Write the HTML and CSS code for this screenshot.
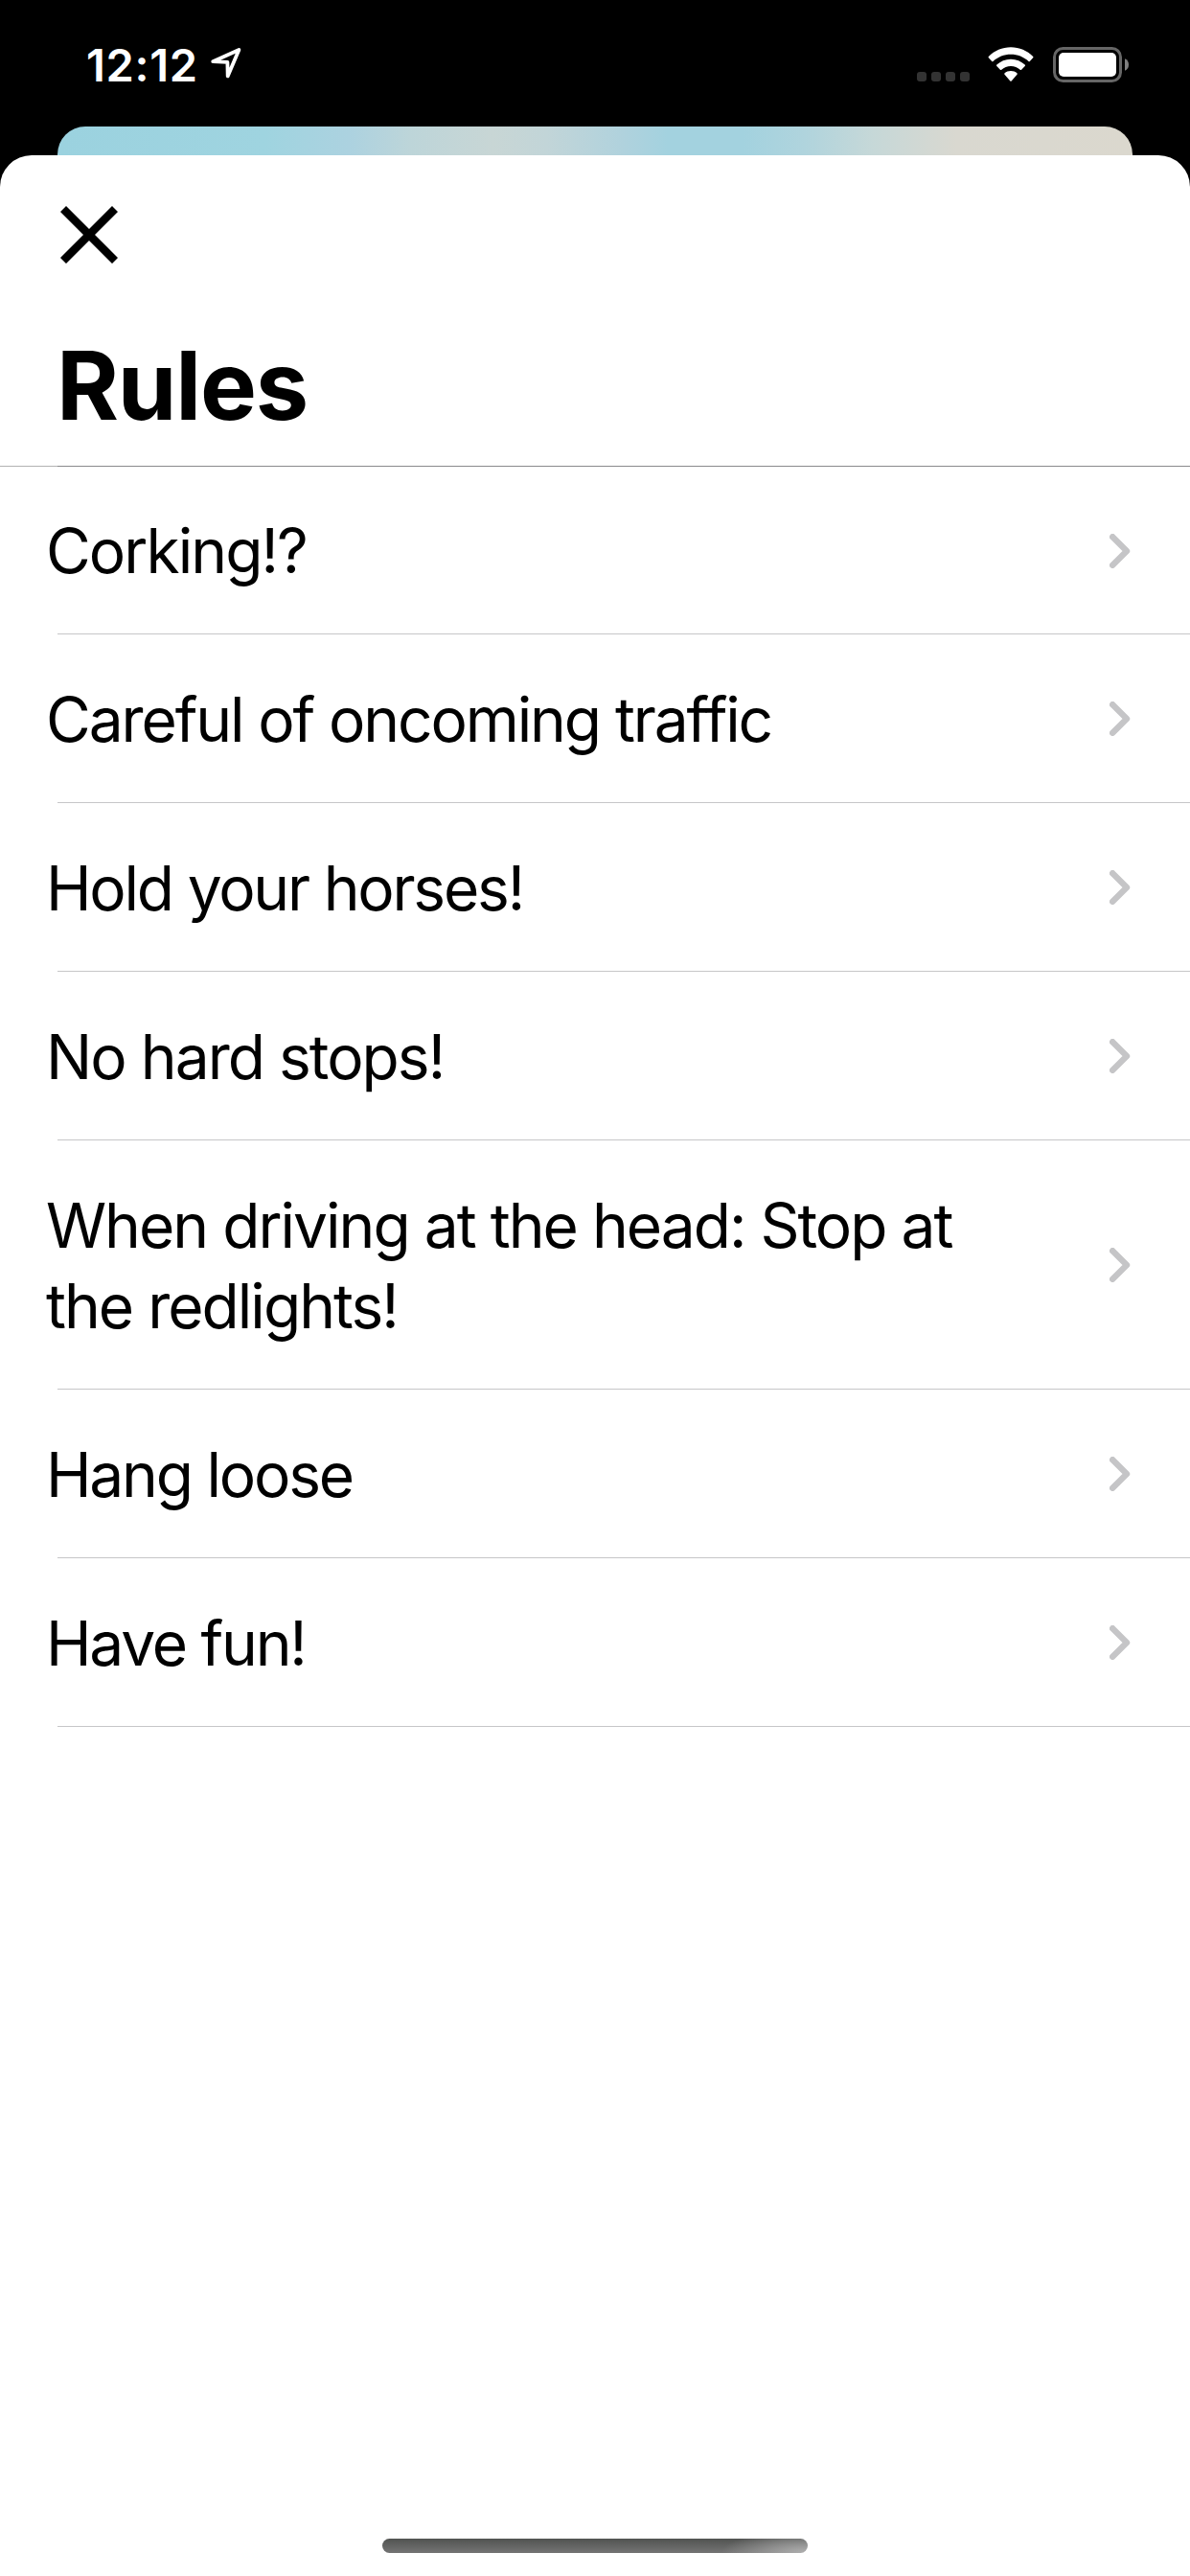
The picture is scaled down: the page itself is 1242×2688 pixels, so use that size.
FILE: index.html
```html
<!DOCTYPE html>
<html lang="en">
<head>
<meta charset="utf-8">
<title>Rules</title>
<link rel="stylesheet" href="styles.css">
</head>
<body>
<div class="screen">
  <header class="status">
    <span class="time">12:12</span>
    <svg class="location" width="34" height="34" viewBox="0 0 34 34"><path d="M3.2 15.2 30.4 3 18.7 30.4 18.4 15.9Z" fill="none" stroke="#fff" stroke-width="3.8" stroke-linejoin="round"/></svg>
    <div class="indicators">
      <div class="signal"><i></i><i></i><i></i><i></i></div>
      <svg class="wifi" width="48" height="37" viewBox="0 0 48 37" fill="#fff">
        <path d="M24 .3C33 .3 41 3.900 47.200 9.900Q47.900 10.600 47.200 11.300L43.800 14.900Q43.200 15.500 42.500 14.900C37.500 10.300 31 7.700 24 7.700S10.500 10.300 5.500 14.900Q4.800 15.500 4.200 14.900L.8 11.300Q.1 10.600 .8 9.900C7 3.900 15 .3 24 .3Z"/>
        <path d="M24 12.700C29.700 12.700 34.800 14.900 38.700 18.500Q39.400 19.200 38.700 19.900L35.100 23.800Q34.400 24.400 33.700 23.800C31.100 21.500 27.700 20 24 20S16.900 21.500 14.300 23.800Q13.600 24.400 12.900 23.800L9.300 19.900Q8.600 19.200 9.300 18.500C13.200 14.900 18.300 12.700 24 12.700Z"/>
        <path d="M24 25C26.600 25 28.700 25.900 30.400 27.300Q31.200 28 30.500 28.800L24.700 35.500Q24 36.200 23.300 35.500L17.500 28.800Q16.800 28 17.600 27.300C19.300 25.900 21.400 25 24 25Z"/>
      </svg>
      <svg class="battery" width="80" height="38" viewBox="0 0 80 38">
        <rect x="1.500" y="1.500" width="69" height="34" rx="9" fill="none" stroke="#666" stroke-width="3"/>
        <rect x="6" y="6" width="60" height="25" rx="5" fill="#fff"/>
        <path d="M75 12.200Q79 14 79 18.500T75 24.800Z" fill="#808080"/>
      </svg>
    </div>
  </header>
  <div class="backdrop"></div>
  <main class="sheet">
    <div class="heading">
      <svg class="close" width="60" height="60" viewBox="0 0 60 60"><path d="M3 3 57 57M57 3 3 57" stroke="#000" stroke-width="8.500"/></svg>
      <h1>Rules</h1>
    </div>
    <ul class="rules">
      <li><span class="corking">Corking!?</span><svg class="chevron" viewBox="0 0 22 36"><path d="M3.200 3.200 18 18 3.200 32.800"/></svg></li>
      <li><span class="traffic">Careful of oncoming traffic</span><svg class="chevron" viewBox="0 0 22 36"><path d="M3.200 3.200 18 18 3.200 32.800"/></svg></li>
      <li><span class="horses">Hold your horses!</span><svg class="chevron" viewBox="0 0 22 36"><path d="M3.200 3.200 18 18 3.200 32.800"/></svg></li>
      <li><span class="stops">No hard stops!</span><svg class="chevron" viewBox="0 0 22 36"><path d="M3.200 3.200 18 18 3.200 32.800"/></svg></li>
      <li><span class="redlights">When driving at the head: Stop at<br>the redlights!</span><svg class="chevron" viewBox="0 0 22 36"><path d="M3.200 3.200 18 18 3.200 32.800"/></svg></li>
      <li><span class="loose">Hang loose</span><svg class="chevron" viewBox="0 0 22 36"><path d="M3.200 3.200 18 18 3.200 32.800"/></svg></li>
      <li><span class="fun">Have fun!</span><svg class="chevron" viewBox="0 0 22 36"><path d="M3.200 3.200 18 18 3.200 32.800"/></svg></li>
    </ul>
    <div class="home"></div>
  </main>
</div>
</body>
</html>
```
FILE: styles.css
```css
* { box-sizing: border-box; }
body { margin: 0; background: #000; font-family: Inter, "Liberation Sans", sans-serif; color: #000; }
.screen { display: flex; flex-direction: column; width: 1242px; height: 2688px; background: #000; }
.status { display: flex; align-items: flex-start; height: 132px; padding: 49px 63px 0 90px; color: #fff; }
.time { width: 129px; font-size: 47px; font-weight: 600; line-height: 38px; letter-spacing: 0.7px; }
.location { display: block; }
.indicators { display: flex; margin-left: auto; }
.signal { display: flex; gap: 5px; margin: 26px 19px 0 0; }
.signal i { width: 10px; height: 10px; border-radius: 3px; background: #333; }
.wifi { margin-right: 20px; }
.backdrop {
  height: 30px;
  margin: 0 60px;
  border-radius: 29px 29px 0 0;
  background: linear-gradient(90deg, #9bd2df 0, #9fd4e0 217px, #acd2e0 304px, #bdd5d9 368px, #c8d6d5 455px, #c2d5d8 510px, #b0d2dd 590px, #a3d2df 637px, #a3d2df 716px, #b0d4dd 780px, #c6d8d8 851px, #d9d8d0 938px, #dbd8ce 1122px);
}
.sheet { display: flex; flex: 1; flex-direction: column; background: #fff; border-radius: 33px 33px 0 0; }
.heading { height: 324px; padding: 53px 0 0 63px; }
.close { display: block; }
h1 { margin: 67px 0 0 -4px; font-size: 99px; font-weight: 700; line-height: 120px; letter-spacing: -1.2px; }
.rules { margin: 0; padding: 1px 0 0; list-style: none; background: linear-gradient(90deg, #b2b2b2 60px, #8a8a8c 60px) top / 100% 1px no-repeat; }
.rules li { display: flex; align-items: center; justify-content: space-between; height: 176px; padding: 0 62px 0 48px; background: linear-gradient(#c6c6c8, #c6c6c8) 60px 100% / 100% 1px no-repeat; }
.rules li:first-child { height: 175px; }
.rules li:nth-child(5) { height: 260px; }
.rules span { padding-top: 2px; font-size: 64px; line-height: 84px; white-space: nowrap; }
.rules .corking { padding-top: 1px; letter-spacing: -1.9px; }
.rules .traffic { letter-spacing: -2.1px; }
.rules .horses { letter-spacing: -2.2px; }
.rules .stops { letter-spacing: -1.95px; }
.rules .redlights { letter-spacing: -1.97px; }
.rules .loose { letter-spacing: -2.2px; }
.rules .fun { letter-spacing: -2.2px; }
.chevron { width: 22px; height: 36px; fill: none; stroke: #c5c5c7; stroke-width: 6.400; stroke-linecap: round; stroke-linejoin: round; }
.home {
  width: 444px;
  height: 15px;
  margin: auto auto 24px;
  border-radius: 8px;
  background: radial-gradient(ellipse 90px 24px at 100% 100%, #b0b0b0, transparent), linear-gradient(#515351, #747474);
}
```
